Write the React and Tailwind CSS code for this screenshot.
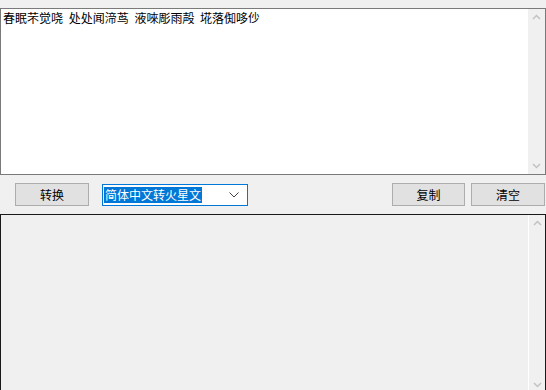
const FONT = { fontFamily: '"Noto Sans CJK SC", "Microsoft YaHei", sans-serif' }

function ScrollBar({ light }) {
  return (
    <div className={`flex w-[17px] flex-col items-center justify-between ${light ? "border-l border-white bg-[#f0f0f0]" : "bg-[#f0f0f0]"}`}>
      <svg width="17" height="17" viewBox="0 0 17 17">
        <path d="M5 10 L8.5 6.5 L12 10" fill="none" stroke="#c2c2c2" strokeWidth="1.5" />
      </svg>
      <svg width="17" height="17" viewBox="0 0 17 17">
        <path d="M5 7 L8.5 10.5 L12 7" fill="none" stroke="#c2c2c2" strokeWidth="1.5" />
      </svg>
    </div>
  )
}

function Btn({ children, className }) {
  return (
    <button className={`h-[23px] border border-[#adadad] bg-[#e1e1e1] text-[12px] text-black ${className}`} style={FONT}>
      {children}
    </button>
  )
}

export default function App() {
  return (
    <div className="h-[390px] w-[546px] overflow-hidden bg-[#f0f0f0] pt-[8px]" style={FONT}>
      {/* source text */}
      <div className="flex h-[167px] w-[546px] border border-[#7a7a7a] bg-white">
        <div className="flex-1 px-[2px] pt-[1px] text-[12px] leading-[16px] text-black [word-spacing:3px]">
          春眠芣觉哓 处处闻渧茑 液唻彫雨殸 埖落倁哆仯
        </div>
        <ScrollBar />
      </div>

      {/* controls */}
      <div className="flex h-[39px] items-center pl-[15px] pr-[1px]">
        <Btn className="w-[74px]">转换</Btn>
        <div className="ml-[13px] flex h-[22px] w-[146px] items-center border border-[#0078d7] bg-white pl-[1px] pr-[8px]">
          <span className="bg-[#0078d7] px-[1px] text-[12px] leading-[16px] text-white">简体中文转火星文</span>
          <svg className="ml-auto" width="10" height="6" viewBox="0 0 10 6">
            <path d="M0.5 0.5 L5 5 L9.5 0.5" fill="none" stroke="#444" strokeWidth="1" />
          </svg>
        </div>
        <Btn className="ml-auto w-[73px]">复制</Btn>
        <Btn className="ml-[6px] w-[74px]">清空</Btn>
      </div>

      {/* result text */}
      <div className="flex h-[180px] w-[546px] border border-[#1a1a1a] bg-[#f0f0f0]">
        <div className="flex-1" />
        <ScrollBar light />
      </div>
    </div>
  )
}
